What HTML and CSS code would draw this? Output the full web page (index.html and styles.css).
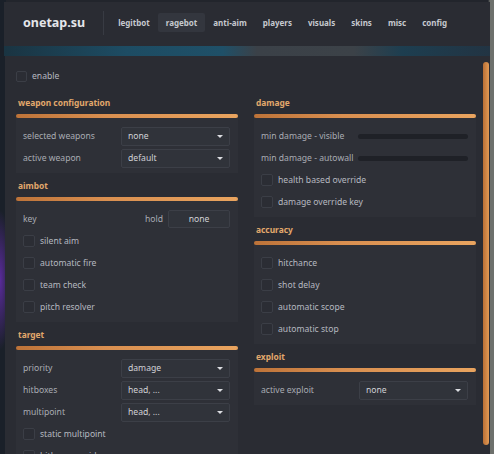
FILE: index.html
```html
<!DOCTYPE html>
<html lang="en">
<head>
  <meta charset="UTF-8" />
  <meta name="viewport" content="width=device-width, initial-scale=1.0"/>
  <title>onetap.su</title>
  <link rel="stylesheet" href="styles.css">
</head>
<body>
  <div class="window">
    <div class="topbar">
      <div class="brand">onetap.su</div>
      <div class="divider"></div>
      <div class="tabs">
        <span class="tab">legitbot</span>
        <span class="tab active">ragebot</span>
        <span class="tab">anti-aim</span>
        <span class="tab">players</span>
        <span class="tab">visuals</span>
        <span class="tab">skins</span>
        <span class="tab">misc</span>
        <span class="tab">config</span>
      </div>
    </div>
    <div class="band"></div>

    <div class="main">
      <div class="content">
        <div class="check enable"><span class="box"></span>enable</div>

        <div class="columns">
          <!-- left column -->
          <div class="col">
            <div class="section">
              <div class="section-title">weapon configuration</div>
              <div class="bar"></div>
              <div class="section-body">
                <div class="row"><span class="label">selected weapons</span><div class="dropdown">none<span class="arrow"></span></div></div>
                <div class="row"><span class="label">active weapon</span><div class="dropdown">default<span class="arrow"></span></div></div>
              </div>
            </div>

            <div class="section">
              <div class="section-title">aimbot</div>
              <div class="bar"></div>
              <div class="section-body">
                <div class="row">
                  <span class="label">key</span>
                  <div class="keybind"><span class="label">hold</span><div class="keybox">none</div></div>
                </div>
                <div class="row check"><span class="box"></span>silent aim</div>
                <div class="row check"><span class="box"></span>automatic fire</div>
                <div class="row check"><span class="box"></span>team check</div>
                <div class="row check"><span class="box"></span>pitch resolver</div>
              </div>
            </div>

            <div class="section">
              <div class="section-title">target</div>
              <div class="bar"></div>
              <div class="section-body">
                <div class="row"><span class="label">priority</span><div class="dropdown">damage<span class="arrow"></span></div></div>
                <div class="row"><span class="label">hitboxes</span><div class="dropdown">head, ...<span class="arrow"></span></div></div>
                <div class="row"><span class="label">multipoint</span><div class="dropdown">head, ...<span class="arrow"></span></div></div>
                <div class="row check"><span class="box"></span>static multipoint</div>
                <div class="row check"><span class="box"></span>hitbox override</div>
              </div>
            </div>
          </div>

          <!-- right column -->
          <div class="col">
            <div class="section">
              <div class="section-title">damage</div>
              <div class="bar"></div>
              <div class="section-body">
                <div class="row"><span class="label">min damage - visible</span><div class="slider"></div></div>
                <div class="row"><span class="label">min damage - autowall</span><div class="slider"></div></div>
                <div class="row check"><span class="box"></span>health based override</div>
                <div class="row check"><span class="box"></span>damage override key</div>
              </div>
            </div>

            <div class="section">
              <div class="section-title">accuracy</div>
              <div class="bar"></div>
              <div class="section-body">
                <div class="row check"><span class="box"></span>hitchance</div>
                <div class="row check"><span class="box"></span>shot delay</div>
                <div class="row check"><span class="box"></span>automatic scope</div>
                <div class="row check"><span class="box"></span>automatic stop</div>
              </div>
            </div>

            <div class="section">
              <div class="section-title">exploit</div>
              <div class="bar"></div>
              <div class="section-body">
                <div class="row"><span class="label">active exploit</span><div class="dropdown">none<span class="arrow"></span></div></div>
              </div>
            </div>
          </div>
        </div>
      </div>

      <div class="scrollbar"><div class="thumb"></div></div>
    </div>
  </div>
</body>
</html>
```

FILE: styles.css
```css
body {
  margin: 0;
  padding: 0;
  height: 454px;
  overflow: hidden;
  font-family: "Noto Sans", "Open Sans", sans-serif;
  color: #b3b6bd;
  background:
    radial-gradient(ellipse 12px 70px at 0 280px, #5a2b9c, transparent),
    linear-gradient(90deg, #1a2029 0, #1a2029 6px, #22252c 6px, #22252c 488px, #6d706c 490px);
}

.window {
  margin-left: 4px;
  width: 486px;
  padding-top: 2px;
}

/* top navigation */
.topbar {
  height: 41px;
  padding-bottom: 3px;
  display: flex;
  align-items: center;
  padding-left: 19px;
  background-color: #2a2c33;
}

.brand {
  font-size: 12.5px;
  font-weight: 700;
  color: #e4e6ea;
}

.divider {
  width: 1px;
  height: 24px;
  margin: 0 6px 0 18px;
  background-color: #383b43;
}

.tabs {
  display: flex;
}

.tab {
  font-size: 8px;
  font-weight: 700;
  color: #c6c9cf;
  padding: 0 8px;
  height: 19px;
  line-height: 19px;
  border-radius: 2px;
}

.tab.active {
  background-color: #33363e;
}

.band {
  height: 10px;
  background: linear-gradient(90deg, #1a3442 0%, #1d4c63 25%, #1f5068 45%, #3b4148 52%, #3c4248 72%, #1d3e50 82%, #223443 100%);
}

/* main panel */
.main {
  display: flex;
  margin-left: 1px;
  height: 400px;
  background-color: #2a2c33;
}

.content {
  width: 478px;
  padding: 14px 0 0 11px;
  box-sizing: border-box;
  overflow: hidden;
}

.scrollbar {
  width: 6px;
  padding-top: 6px;
}

.thumb {
  height: 383px;
  border-radius: 3px;
  background: linear-gradient(90deg, #b96f35, #e29a55);
}

.columns {
  display: flex;
  gap: 16px;
  margin-top: 14px;
}

.col {
  width: 222px;
}

.section {
  margin-bottom: 6px;
}

.section-title {
  height: 14px;
  line-height: 14px;
  padding-left: 2px;
  font-size: 8.4px;
  font-weight: 700;
  color: #e2a86c;
}

.bar {
  height: 4px;
  margin-top: 4px;
  border-radius: 2px;
  background: linear-gradient(90deg, #bd7339, #d98f50 40%, #e9a45f 100%);
  box-shadow: 0 1px 0 #5a3a22;
}

.section-body {
  display: flex;
  flex-direction: column;
  gap: 2px;
  padding: 8px 8px 5px 7px;
  background-color: #2e3037;
}

.row {
  height: 20px;
  display: flex;
  align-items: center;
  justify-content: space-between;
  font-size: 8.6px;
}

.label {
  color: #a9acb3;
}

.dropdown {
  position: relative;
  width: 109px;
  height: 19px;
  line-height: 17px;
  box-sizing: border-box;
  padding-left: 6px;
  border: 1px solid #3c3f47;
  border-radius: 2px;
  background-color: #30333a;
  color: #d0d2d7;
}

.arrow {
  position: absolute;
  right: 6px;
  top: 7px;
  border-left: 3px solid transparent;
  border-right: 3px solid transparent;
  border-top: 3px solid #dcdee2;
}

.keybind {
  display: flex;
  align-items: center;
  gap: 5px;
}

.keybox {
  width: 62px;
  height: 18px;
  line-height: 16px;
  box-sizing: border-box;
  text-align: center;
  border: 1px solid #3c3f47;
  border-radius: 2px;
  background-color: #30333a;
  color: #d0d2d7;
}

.slider {
  width: 110px;
  height: 5px;
  border-radius: 3px;
  background-color: #1f2127;
}

.check {
  display: flex;
  align-items: center;
  justify-content: flex-start;
  gap: 5px;
  font-size: 8.6px;
  color: #b6b9c0;
}

.check .box {
  width: 12px;
  height: 12px;
  box-sizing: border-box;
  border: 1px solid #3b3e46;
  border-radius: 2px;
  background-color: #2b2d34;
}

.enable {
  height: 12px;
}

.enable .box {
  width: 11px;
  height: 11px;
}
```
